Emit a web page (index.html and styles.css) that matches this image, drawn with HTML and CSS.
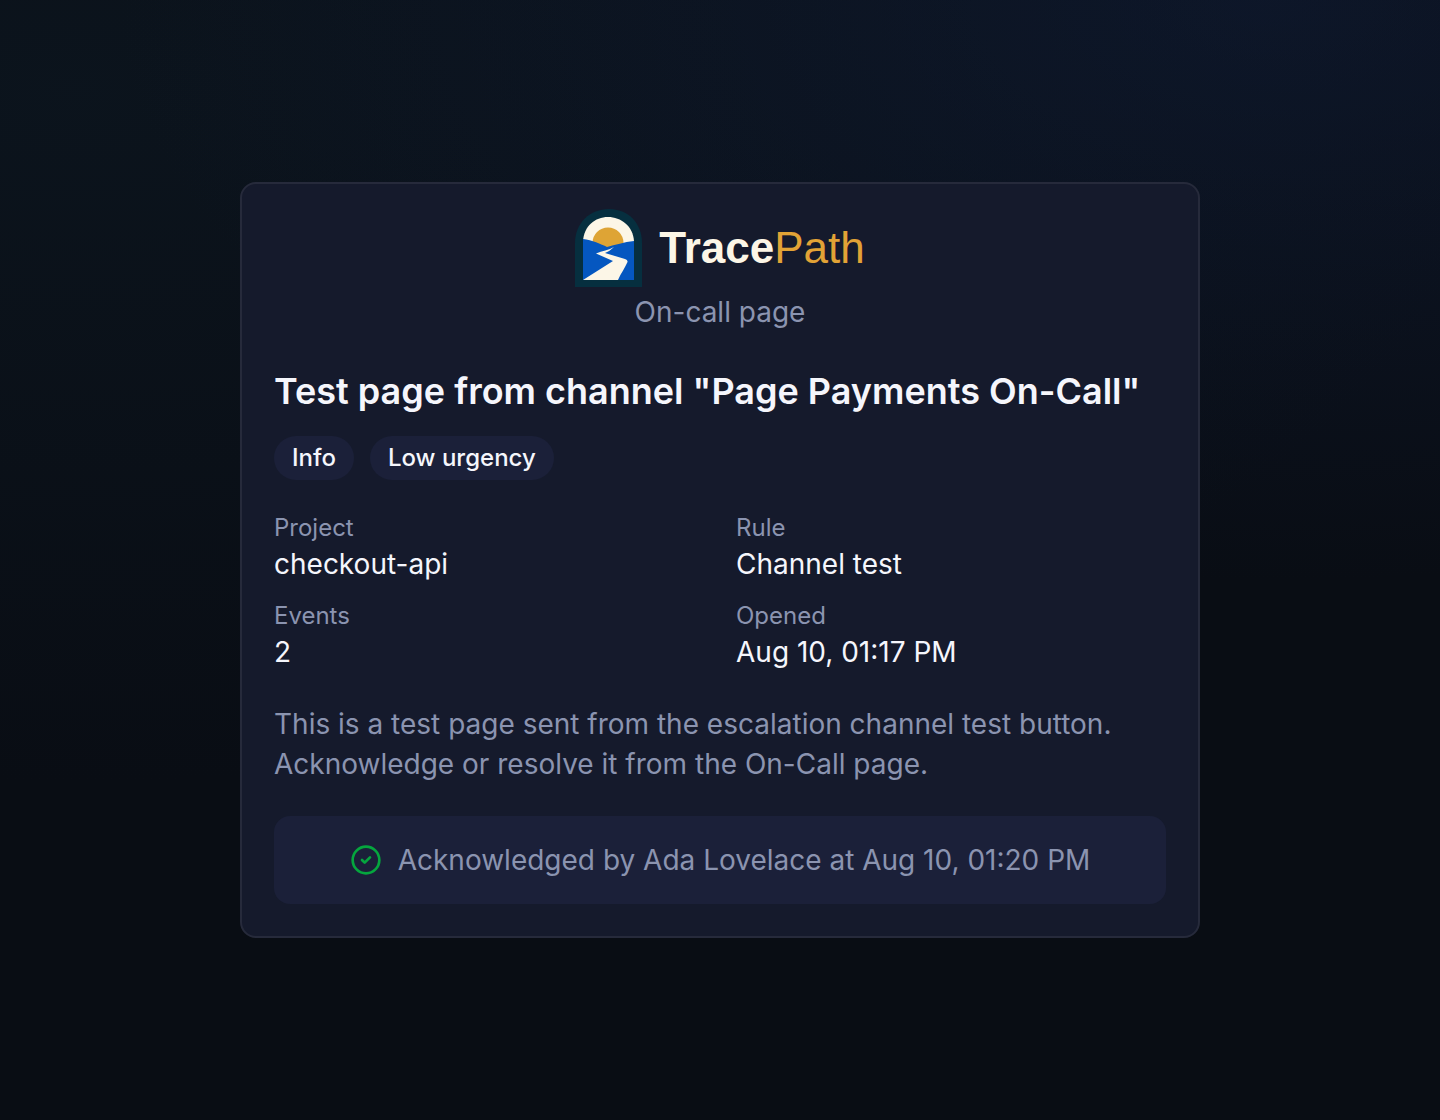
FILE: index.html
```html
<!DOCTYPE html>
<html lang="en">
<head>
<meta charset="utf-8">
<meta name="viewport" content="width=device-width, initial-scale=1">
<title>TracePath – On-call page</title>
<link rel="stylesheet" href="styles.css">
</head>
<body>
<main class="card">
  <header class="header">
    <div class="brand">
      <svg class="brand-mark" viewBox="0 0 68 80" aria-hidden="true">
        <path fill="#062f3f" d="M0 79V35C0 15 15 1 34 1s33 14 33 34v44z"/>
        <path fill="#fcf6e7" d="M8 72V33C9 18 20 9 33 9s25 9 26 24v39z"/>
        <circle cx="33" cy="35" r="15.500" fill="#dea435"/>
        <path fill="#0557c0" d="M8 31C17 32 26 36 32 39C40 37 49 34 59 33V72H8z"/>
        <path fill="#fcf6e7" d="M39 39C34 42 27 43 21 45.500L38 53L8 72H43C46 65 50 60 52.500 54Q53 52 50 51L30 45Q35 43 39 39z"/>
      </svg>
      <span class="brand-name"><strong>Trace</strong><span class="brand-accent">Path</span></span>
    </div>
    <p class="subtitle">On-call page</p>
  </header>
  <h1 class="title">Test page from channel "Page Payments On-Call"</h1>
  <div class="badges">
    <span class="badge">Info</span>
    <span class="badge">Low urgency</span>
  </div>
  <dl class="details">
    <div><dt>Project</dt><dd>checkout-api</dd></div>
    <div><dt>Rule</dt><dd>Channel test</dd></div>
    <div><dt>Events</dt><dd>2</dd></div>
    <div><dt>Opened</dt><dd>Aug 10, 01:17 PM</dd></div>
  </dl>
  <p class="message">This is a test page sent from the escalation channel test button. Acknowledge or resolve it from the On-Call page.</p>
  <div class="status" role="status">
    <svg class="status-icon" viewBox="0 0 32 32" fill="none" stroke="currentColor" stroke-width="2.667" stroke-linecap="round" stroke-linejoin="round" aria-hidden="true">
      <circle cx="16" cy="16" r="13.333"/>
      <path d="M12 16l2.667 2.667L20 13.333"/>
    </svg>
    <span>Acknowledged by Ada Lovelace at Aug 10, 01:20 PM</span>
  </div>
</main>
</body>
</html>
```
FILE: styles.css
```css
* { box-sizing: border-box; }

body {
  margin: 0;
  min-height: 100vh;
  display: flex;
  align-items: center;
  justify-content: center;
  padding: 32px;
  font-family: Inter, "Liberation Sans", sans-serif;
  font-size: 28px;
  line-height: 40px;
  color: #f5f6fc;
  background:
    radial-gradient(ellipse 80% 52% at 88% 0%, rgba(19, 35, 70, 0.4), transparent),
    radial-gradient(ellipse 100% 62% at 5% 8%, rgba(15, 30, 42, 0.4), transparent),
    #090d14;
}

p, h1, dl, dd { margin: 0; }

.card {
  width: 100%;
  max-width: 960px;
  padding: 24px 32px 32px;
  background: #151a2c;
  border: 2px solid #262a3b;
  border-radius: 16px;
}

.header {
  display: flex;
  flex-direction: column;
  align-items: center;
  gap: 4px;
}

.brand {
  display: flex;
  align-items: center;
  gap: 16px;
}

.brand-mark { width: 68px; height: 80px; }

.brand-name {
  font-family: "Liberation Sans", Arial, sans-serif;
  font-size: 44px;
  line-height: 48px;
  color: #fcf6e7;
}

.brand-accent { color: #e2a336; }

.subtitle, .message { color: #8b94b0; }

.title {
  margin-top: 36px;
  font-size: 36px;
  font-weight: 600;
  line-height: 46px;
}

.badges {
  display: flex;
  flex-wrap: wrap;
  gap: 16px;
  margin-top: 22px;
}

.badge {
  padding: 6px 18px;
  border-radius: 22px;
  background: #1b2039;
  font-size: 24px;
  font-weight: 500;
  line-height: 32px;
}

.details {
  display: grid;
  grid-template-columns: 1fr 1fr;
  gap: 16px 32px;
  margin-top: 32px;
}

.details dt {
  font-size: 24px;
  line-height: 32px;
  color: #8b94b0;
}

.message { margin-top: 32px; }

.status {
  display: flex;
  align-items: center;
  justify-content: center;
  gap: 16px;
  margin-top: 32px;
  padding: 24px;
  border-radius: 16px;
  background: #1b2039;
  color: #8b94b0;
}

.status-icon {
  width: 32px;
  height: 32px;
  color: #05a63e;
}
```
